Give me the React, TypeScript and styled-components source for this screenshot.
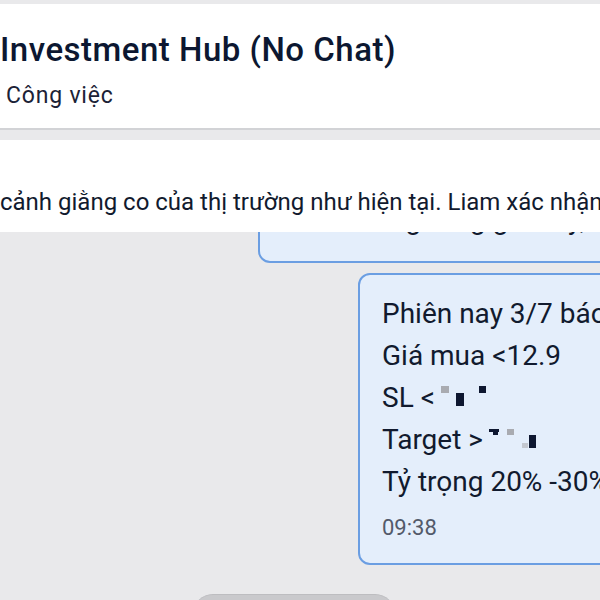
import styled, { createGlobalStyle } from 'styled-components';

const GlobalStyle = createGlobalStyle`
  html, body {
    margin: 0;
    padding: 0;
    background: #e9e9eb;
  }
  body {
    font-family: Roboto, "Liberation Sans", sans-serif;
    color: #0e1730;
  }
`;

const Page = styled.div`
  width: 600px;
  height: 600px;
  overflow: hidden;
  display: flex;
  flex-direction: column;
  padding-top: 4px;
  box-sizing: border-box;
`;

const Header = styled.header`
  flex: 0 0 auto;
  background: #ffffff;
  border-bottom: 2px solid #d2d3d6;
  padding: 26px 0 17px 0;
  white-space: nowrap;
`;

const Title = styled.h1`
  margin: 0;
  font-size: 33px;
  line-height: 40px;
  font-weight: 500;
  letter-spacing: 0.5px;
  color: #0c1731;
`;

const Subtitle = styled.div`
  margin-top: 11px;
  padding-left: 6px;
  font-size: 23px;
  line-height: 30px;
  letter-spacing: 0.8px;
  color: #1b2236;
`;

const ChatArea = styled.main`
  position: relative;
  flex: 1 1 auto;
  margin-top: 10px;
  overflow: hidden;
  display: flex;
  flex-direction: column;
  justify-content: flex-end;
  gap: 10px;
  padding-bottom: 35px;
`;

const PinnedBanner = styled.div`
  position: absolute;
  top: 0;
  left: 0;
  right: 0;
  z-index: 2;
  background: #ffffff;
  padding: 47px 0 15px 0;
  font-size: 24px;
  line-height: 30px;
  white-space: nowrap;
  overflow: hidden;
  color: #111a2e;
`;

const Bubble = styled.div<{ $indent: number }>`
  flex: 0 0 auto;
  margin-left: ${(p) => p.$indent}px;
  width: 420px;
  background: #e4eefb;
  border: 2px solid #6b9ee2;
  border-radius: 12px;
  padding: 18px 22px 20px 22px;
  white-space: nowrap;
`;

const Line = styled.div`
  font-size: 28px;
  line-height: 42px;
  color: #111a2e;
`;

const Time = styled.div`
  margin-top: 10px;
  font-size: 22px;
  line-height: 30px;
  color: #535a6a;
`;

const Redacted = styled.svg`
  vertical-align: baseline;
  margin-left: 4px;
`;

const ScrollPill = styled.div`
  position: absolute;
  left: 193px;
  bottom: -35px;
  width: 202px;
  height: 40px;
  border-radius: 20px;
  background: #c9c9cc;
  border-top: 1px solid #bdbdc0;
`;

const SlBlur = () => (
  <Redacted width="48" height="22" viewBox="0 0 48 22">
    <rect x="2" y="1" width="8" height="7" fill="#a9abb1" />
    <rect x="17" y="8" width="8" height="13" fill="#0e1730" />
    <rect x="40" y="1" width="7" height="7" fill="#0e1730" />
  </Redacted>
);

const TargetBlur = () => (
  <Redacted width="50" height="22" viewBox="0 0 50 22">
    <rect x="2" y="2" width="10" height="3" fill="#0e1730" />
    <rect x="6" y="2" width="5" height="6" fill="#0e1730" />
    <rect x="20" y="2" width="7" height="6" fill="#a9abb1" />
    <rect x="35" y="16" width="6" height="5" fill="#c4c8d0" />
    <rect x="42" y="8" width="7" height="13" fill="#0e1730" />
  </Redacted>
);

export default function App() {
  return (
    <>
      <GlobalStyle />
      <Page>
        <Header>
          <Title>Investment Hub (No Chat)</Title>
          <Subtitle>Công việc</Subtitle>
        </Header>
        <ChatArea>
          <PinnedBanner>
            cảnh giằng co của thị trường như hiện tại. Liam xác nhận
          </PinnedBanner>
          <Bubble $indent={258}>
            <Line>Liam đánh giá mã này phù hợp trong bối</Line>
            <Line>cảnh giằng co của thị trường như hiện tại.</Line>
            <Line>Xem xét ngưỡng giá này, không</Line>
          </Bubble>
          <Bubble $indent={358}>
            <Line>Phiên nay 3/7 báo mua</Line>
            <Line>Giá mua &lt;12.9</Line>
            <Line>
              SL &lt;
              <SlBlur />
            </Line>
            <Line>
              Target &gt;
              <TargetBlur />
            </Line>
            <Line>Tỷ trọng 20% -30%</Line>
            <Time>09:38</Time>
          </Bubble>
          <ScrollPill />
        </ChatArea>
      </Page>
    </>
  );
}
